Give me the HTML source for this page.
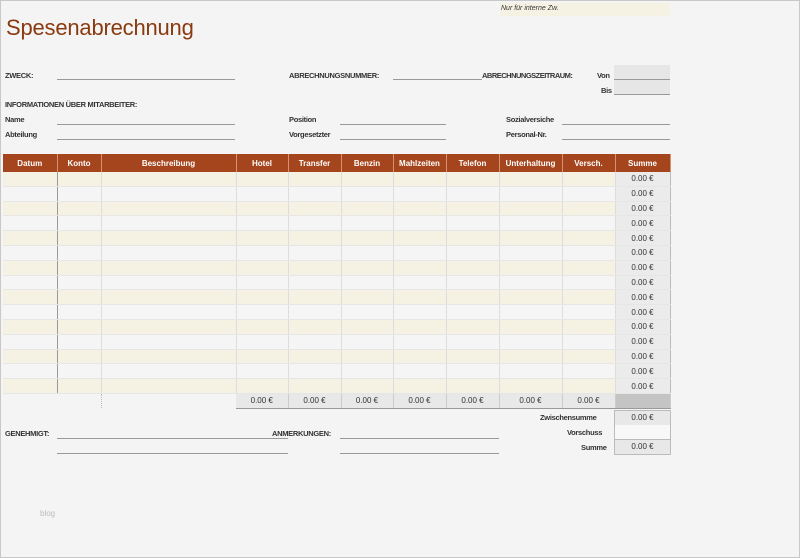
<!DOCTYPE html>
<html><head><meta charset="utf-8"><style>
body{margin:0;width:800px;height:558px;background:#f4f4f4;font-family:"Liberation Sans",sans-serif;position:relative;overflow:hidden}
.frame{position:absolute;left:0;top:0;width:798px;height:556px;border:1px solid #c8c8c8}
.a{position:absolute;white-space:nowrap}
.lbl{font-size:7.5px;font-weight:bold;color:#333;letter-spacing:-0.3px}
.ln{position:absolute;height:1px;background:#999}
table{position:absolute;left:3px;top:154px;border-collapse:collapse;table-layout:fixed;font-size:8px}
th{background:#a5451d;color:#fff;height:18px;padding:0;font-weight:bold;border-right:1px solid #d89070;text-align:center}
td{padding:0;height:13.8px;line-height:13px;border-right:1px solid #ddd;border-bottom:1px solid #e6e6e6;overflow:hidden}
tr.c td{background:#f5f2e3}
tr.w td{background:#f5f5f5}
td.s{background:#ebebeb!important;text-align:center;color:#333;border-left:1px solid #bbb;border-right:1px solid #bbb}
td.k{border-right:1px solid #999}
tr.t td{background:#f4f4f4;border:none;height:14px}
tr.t td.v{background:#e8e8e8;text-align:center;color:#333;border-top:1px solid #999;border-bottom:1px solid #999;border-right:1px solid #ccc}
</style></head><body>
<div class="frame"></div>
<div class="a" style="left:500px;top:3px;width:170px;height:13px;background:#f5f2e3"></div>
<div class="a" style="left:501px;top:5px;font-size:7px;font-style:italic;color:#333">Nur für interne Zw.</div>
<div class="a" style="left:6px;top:15px;font-size:22px;color:#8a3a10;letter-spacing:-0.2px">Spesenabrechnung</div>

<div class="a lbl" style="left:5px;top:71px">ZWECK:</div><div class="ln" style="left:57px;top:79px;width:178px"></div>
<div class="a lbl" style="left:289px;top:71px">ABRECHNUNGSNUMMER:</div><div class="ln" style="left:393px;top:79px;width:89px"></div>
<div class="a lbl" style="left:482px;top:71px;letter-spacing:-0.5px">ABRECHNUNGSZEITRAUM:</div>
<div class="a lbl" style="left:597px;top:71px">Von</div><div class="a" style="left:614px;top:65px;width:56px;height:14px;background:#e6e6e6;border-bottom:1px solid #999"></div>
<div class="a lbl" style="left:601px;top:86px">Bis</div><div class="a" style="left:614px;top:80px;width:56px;height:14px;background:#e6e6e6;border-bottom:1px solid #999"></div>

<div class="a lbl" style="left:5px;top:100px">INFORMATIONEN ÜBER MITARBEITER:</div>
<div class="a lbl" style="left:5px;top:115px">Name</div><div class="ln" style="left:57px;top:124px;width:178px"></div>
<div class="a lbl" style="left:5px;top:130px">Abteilung</div><div class="ln" style="left:57px;top:139px;width:178px"></div>
<div class="a lbl" style="left:289px;top:115px">Position</div><div class="ln" style="left:340px;top:124px;width:106px"></div>
<div class="a lbl" style="left:289px;top:130px">Vorgesetzter</div><div class="ln" style="left:340px;top:139px;width:106px"></div>
<div class="a lbl" style="left:506px;top:115px">Sozialversiche</div><div class="ln" style="left:562px;top:124px;width:108px"></div>
<div class="a lbl" style="left:506px;top:130px">Personal-Nr.</div><div class="ln" style="left:562px;top:139px;width:108px"></div>

<table>
<colgroup><col style="width:54px"><col style="width:44px"><col style="width:135px"><col style="width:52px"><col style="width:53px"><col style="width:52px"><col style="width:53px"><col style="width:53px"><col style="width:63px"><col style="width:53px"><col style="width:55px"></colgroup>
<tr><th>Datum</th><th>Konto</th><th>Beschreibung</th><th>Hotel</th><th>Transfer</th><th>Benzin</th><th>Mahlzeiten</th><th>Telefon</th><th>Unterhaltung</th><th>Versch.</th><th>Summe</th></tr>
<tr class="c"><td class="k"></td><td></td><td></td><td></td><td></td><td></td><td></td><td></td><td></td><td></td><td class="s">0.00 €</td></tr>
<tr class="w"><td class="k"></td><td></td><td></td><td></td><td></td><td></td><td></td><td></td><td></td><td></td><td class="s">0.00 €</td></tr>
<tr class="c"><td class="k"></td><td></td><td></td><td></td><td></td><td></td><td></td><td></td><td></td><td></td><td class="s">0.00 €</td></tr>
<tr class="w"><td class="k"></td><td></td><td></td><td></td><td></td><td></td><td></td><td></td><td></td><td></td><td class="s">0.00 €</td></tr>
<tr class="c"><td class="k"></td><td></td><td></td><td></td><td></td><td></td><td></td><td></td><td></td><td></td><td class="s">0.00 €</td></tr>
<tr class="w"><td class="k"></td><td></td><td></td><td></td><td></td><td></td><td></td><td></td><td></td><td></td><td class="s">0.00 €</td></tr>
<tr class="c"><td class="k"></td><td></td><td></td><td></td><td></td><td></td><td></td><td></td><td></td><td></td><td class="s">0.00 €</td></tr>
<tr class="w"><td class="k"></td><td></td><td></td><td></td><td></td><td></td><td></td><td></td><td></td><td></td><td class="s">0.00 €</td></tr>
<tr class="c"><td class="k"></td><td></td><td></td><td></td><td></td><td></td><td></td><td></td><td></td><td></td><td class="s">0.00 €</td></tr>
<tr class="w"><td class="k"></td><td></td><td></td><td></td><td></td><td></td><td></td><td></td><td></td><td></td><td class="s">0.00 €</td></tr>
<tr class="c"><td class="k"></td><td></td><td></td><td></td><td></td><td></td><td></td><td></td><td></td><td></td><td class="s">0.00 €</td></tr>
<tr class="w"><td class="k"></td><td></td><td></td><td></td><td></td><td></td><td></td><td></td><td></td><td></td><td class="s">0.00 €</td></tr>
<tr class="c"><td class="k"></td><td></td><td></td><td></td><td></td><td></td><td></td><td></td><td></td><td></td><td class="s">0.00 €</td></tr>
<tr class="w"><td class="k"></td><td></td><td></td><td></td><td></td><td></td><td></td><td></td><td></td><td></td><td class="s">0.00 €</td></tr>
<tr class="c"><td class="k"></td><td></td><td></td><td></td><td></td><td></td><td></td><td></td><td></td><td></td><td class="s">0.00 €</td></tr>
<tr class="t"><td></td><td style="border-right:1px dotted #bbb"></td><td></td><td class="v">0.00 €</td><td class="v">0.00 €</td><td class="v">0.00 €</td><td class="v">0.00 €</td><td class="v">0.00 €</td><td class="v">0.00 €</td><td class="v">0.00 €</td><td class="v" style="background:#c4c4c4"></td></tr>
</table>

<div class="a lbl" style="left:540px;top:413px">Zwischensumme</div>
<div class="a" style="left:614px;top:410px;width:55px;height:14px;background:#e8e8e8;border:1px solid #bbb;font-size:8px;text-align:center;line-height:14px;color:#333">0.00 €</div>
<div class="a lbl" style="left:567px;top:428px">Vorschuss</div>
<div class="a" style="left:614px;top:425px;width:55px;height:14px;background:#f8f8f8;border-left:1px solid #bbb;border-right:1px solid #bbb"></div>
<div class="a lbl" style="left:581px;top:443px">Summe</div>
<div class="a" style="left:614px;top:439px;width:55px;height:14px;background:#e8e8e8;border:1px solid #bbb;font-size:8px;text-align:center;line-height:14px;color:#333">0.00 €</div>

<div class="a lbl" style="left:5px;top:429px">GENEHMIGT:</div>
<div class="ln" style="left:57px;top:438px;width:231px"></div><div class="ln" style="left:57px;top:453px;width:231px"></div>
<div class="a lbl" style="left:272px;top:429px">ANMERKUNGEN:</div>
<div class="ln" style="left:340px;top:438px;width:159px"></div><div class="ln" style="left:340px;top:453px;width:159px"></div>
<div class="a" style="left:40px;top:509px;font-size:8px;color:#bbb">blog</div>
</body></html>
